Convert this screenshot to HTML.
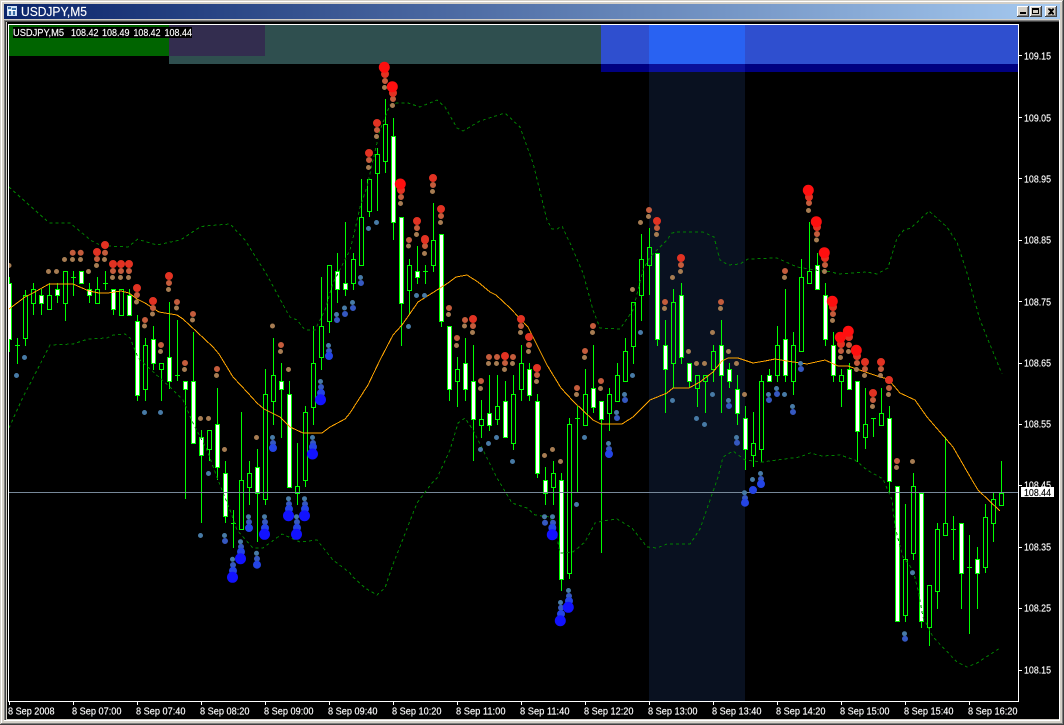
<!DOCTYPE html>
<html><head><meta charset="utf-8"><title>USDJPY,M5</title>
<style>
html,body{margin:0;padding:0;background:#d4d0c8;width:1064px;height:725px;overflow:hidden}
svg{display:block}
text{font-family:"Liberation Sans",sans-serif;fill:#fff;stroke:#fff;stroke-width:.15}
.c{shape-rendering:crispEdges}
</style></head><body>
<svg width="1064" height="725" viewBox="0 0 1064 725" xmlns="http://www.w3.org/2000/svg">
<defs>
<linearGradient id="tb" x1="0" x2="1" y1="0" y2="0"><stop offset="0" stop-color="#0a246a"/><stop offset="1" stop-color="#a6caf0"/></linearGradient>
<clipPath id="cl"><rect x="9" y="25" width="1009" height="676"/></clipPath>
</defs>
<g class="c">
<rect width="1064" height="725" fill="#d4d0c8"/>
<rect x="1" y="1" width="1062" height="1" fill="#fff"/>
<rect x="1" y="1" width="1" height="723" fill="#fff"/>
<rect x="0" y="724" width="1064" height="1" fill="#404040"/>
<rect x="1063" y="0" width="1" height="725" fill="#404040"/>
<rect x="1" y="723" width="1062" height="1" fill="#808080"/>
<rect x="1062" y="1" width="1" height="723" fill="#808080"/>
<rect x="4" y="4" width="1056" height="15" fill="url(#tb)"/>
<rect x="4" y="20" width="1056" height="1" fill="#808080"/>
<rect x="4" y="21" width="1056" height="1" fill="#404040"/>
<rect x="4" y="20" width="1" height="701" fill="#808080"/>
<rect x="5" y="21" width="1" height="699" fill="#404040"/>
<rect x="4" y="720" width="1056" height="1" fill="#fff"/>
<rect x="1059" y="20" width="1" height="701" fill="#fff"/>
<rect x="7" y="22" width="1052" height="697" fill="#000"/>
<!-- icon -->
<rect x="7" y="6" width="10" height="10" fill="#cfe0f5"/>
<rect x="8" y="7" width="3" height="2" fill="#3a6ea5"/><rect x="12" y="8" width="4" height="2" fill="#3a6ea5"/>
<rect x="8" y="10" width="8" height="1" fill="#fff"/><rect x="9" y="11" width="2" height="4" fill="#3a6ea5"/><rect x="13" y="11" width="2" height="4" fill="#3a6ea5"/>
<!-- buttons -->
<g>
<rect x="1017" y="6" width="12" height="11" fill="#404040"/><rect x="1017" y="6" width="11" height="10" fill="#fff"/><rect x="1018" y="7" width="10" height="9" fill="#808080"/><rect x="1018" y="7" width="9" height="8" fill="#d4d0c8"/>
<rect x="1020" y="12" width="6" height="2" fill="#000"/>
<rect x="1030" y="6" width="12" height="11" fill="#404040"/><rect x="1030" y="6" width="11" height="10" fill="#fff"/><rect x="1031" y="7" width="10" height="9" fill="#808080"/><rect x="1031" y="7" width="9" height="8" fill="#d4d0c8"/>
<path d="M1032.5 8.5h6v5h-6z" fill="none" stroke="#000"/><rect x="1032" y="8" width="7" height="2" fill="#000"/>
<rect x="1045" y="6" width="12" height="11" fill="#404040"/><rect x="1045" y="6" width="11" height="10" fill="#fff"/><rect x="1046" y="7" width="10" height="9" fill="#808080"/><rect x="1046" y="7" width="9" height="8" fill="#d4d0c8"/>
<path d="M1048 8.5h2l1 1 1-1h2v1l-2 2 2 2v1h-2l-1-1-1 1h-2v-1l2-2-2-2z" fill="#000"/>
</g>
<!-- chart backgrounds -->
<rect x="649" y="25" width="96" height="676" fill="#091120"/>
<rect x="9" y="25" width="160" height="31" fill="#006400"/>
<rect x="169" y="25" width="432" height="39" fill="#2f4f4f"/>
<rect x="169" y="25" width="96" height="31" fill="#332d4f"/>
<rect x="601" y="25" width="417" height="39" fill="#2f4fcf"/>
<rect x="649" y="25" width="96" height="39" fill="#2962f2"/>
<rect x="601" y="64" width="417" height="8" fill="#000080"/>
<rect x="649" y="64" width="96" height="8" fill="#0a109a"/>
</g>
<g clip-path="url(#cl)">
<!-- wicks -->
<path class="c" fill="none" stroke="#0f0" d="M9.5 277V352M17.5 338V364M25.5 290V346M33.5 283V315M41.5 289V315M49.5 283V309M57.5 283V303M65.5 271V321M73.5 271V296M81.5 271V283M89.5 283V303M97.5 277V303M105.5 271V290M113.5 289V315M121.5 289V315M129.5 289V315M137.5 315V401M145.5 338V401M153.5 326V370M161.5 363V401M169.5 302V389M177.5 320V381M185.5 381V499M193.5 332V443M201.5 430V523M209.5 430V461M217.5 388V480M225.5 461V523M233.5 510V548M241.5 412V529M249.5 461V505M257.5 449V542M265.5 369V505M273.5 338V425M281.5 363V438M289.5 381V487M297.5 443V505M305.5 406V487M313.5 326V425M321.5 277V370M329.5 265V333M337.5 253V303M345.5 222V296M353.5 253V290M361.5 179V265M369.5 179V217M377.5 148V211M385.5 99V173M393.5 118V240M401.5 217V346M409.5 259V315M417.5 246V284M425.5 265V284M433.5 203V272M441.5 234V327M449.5 326V401M457.5 357V407M465.5 338V401M473.5 345V461M481.5 400V438M489.5 375V431M497.5 375V425M505.5 381V437M513.5 375V450M521.5 345V401M529.5 363V401M537.5 394V478M545.5 467V505M553.5 461V505M561.5 473V591M569.5 418V579M577.5 406V493M585.5 369V425M593.5 345V413M601.5 401V553M609.5 388V431M617.5 363V401M625.5 338V381M633.5 302V364M641.5 234V321M649.5 228V295M657.5 253V346M665.5 320V413M673.5 289V388M681.5 283V364M689.5 363V388M697.5 375V407M705.5 375V413M713.5 345V382M721.5 320V413M729.5 363V388M737.5 375V425M745.5 406V470M753.5 412V467M761.5 375V462M769.5 369V381M777.5 326V382M785.5 289V382M793.5 332V395M801.5 259V351M809.5 222V283M817.5 253V289M825.5 283V346M833.5 332V382M841.5 369V407M849.5 363V389M857.5 381V462M865.5 388V449M873.5 418V437M881.5 388V425M889.5 406V492M897.5 486V621M905.5 504V622M913.5 473V560M921.5 493V628M929.5 585V646M937.5 523V609M945.5 437V535M953.5 516V560M961.5 523V609M969.5 535V634M977.5 547V609M985.5 504V573M993.5 493V542M1001.5 461V505
M15 345.5h5M71 277.5h5M103 283.5h5M175 375.5h5M231 523.5h5M423 271.5h5M575 418.5h5M871 418.5h5M951 529.5h5M967 567.5h5"/>
<!-- hollow bodies, black background -->
<path class="c" fill="#000" stroke="#0f0" d="M23.5 295.5h4v43h-4zM31.5 289.5h4v14h-4zM47.5 295.5h4v14h-4zM63.5 271.5h4v32h-4zM95.5 289.5h4v14h-4zM119.5 289.5h4v26h-4zM143.5 345.5h4v44h-4zM159.5 363.5h4v6h-4zM207.5 430.5h4v19h-4zM239.5 480.5h4v49h-4zM247.5 473.5h4v14h-4zM263.5 394.5h4v105h-4zM271.5 375.5h4v26h-4zM295.5 486.5h4v7h-4zM303.5 412.5h4v68h-4zM311.5 363.5h4v44h-4zM319.5 326.5h4v31h-4zM327.5 265.5h4v56h-4zM351.5 259.5h4v24h-4zM359.5 217.5h4v48h-4zM367.5 179.5h4v32h-4zM375.5 154.5h4v19h-4zM383.5 124.5h4v37h-4zM407.5 265.5h4v25h-4zM431.5 240.5h4v25h-4zM455.5 369.5h4v12h-4zM479.5 419.5h4v6h-4zM495.5 406.5h4v13h-4zM511.5 394.5h4v49h-4zM519.5 363.5h4v26h-4zM551.5 473.5h4v14h-4zM567.5 424.5h4v149h-4zM583.5 394.5h4v31h-4zM607.5 394.5h4v19h-4zM615.5 375.5h4v26h-4zM623.5 351.5h4v30h-4zM631.5 302.5h4v44h-4zM639.5 259.5h4v36h-4zM751.5 443.5h4v12h-4zM759.5 381.5h4v68h-4zM775.5 345.5h4v30h-4zM791.5 345.5h4v36h-4zM799.5 277.5h4v74h-4zM807.5 271.5h4v12h-4zM839.5 375.5h4v6h-4zM863.5 424.5h4v13h-4zM879.5 413.5h4v12h-4zM903.5 559.5h4v56h-4zM911.5 486.5h4v67h-4zM927.5 585.5h4v42h-4zM935.5 529.5h4v62h-4zM943.5 523.5h4v12h-4zM983.5 517.5h4v50h-4zM991.5 499.5h4v24h-4zM999.5 493.5h4v12h-4z"/>
<!-- hollow bodies inside shaded column -->
<path class="c" fill="#091120" stroke="#0f0" d="M647.5 247.5h4v18h-4zM671.5 302.5h4v61h-4zM695.5 375.5h4v13h-4zM703.5 375.5h4v6h-4zM711.5 351.5h4v18h-4z"/>
<!-- white bodies -->
<path class="c" fill="#fff" stroke="#0f0" d="M7.5 283.5h4v56h-4zM39.5 295.5h4v8h-4zM55.5 289.5h4v6h-4zM79.5 271.5h4v12h-4zM87.5 289.5h4v6h-4zM111.5 289.5h4v20h-4zM127.5 295.5h4v20h-4zM135.5 321.5h4v74h-4zM151.5 339.5h4v24h-4zM167.5 357.5h4v24h-4zM183.5 381.5h4v8h-4zM191.5 381.5h4v62h-4zM199.5 437.5h4v18h-4zM215.5 424.5h4v43h-4zM223.5 473.5h4v43h-4zM255.5 467.5h4v26h-4zM279.5 381.5h4v8h-4zM287.5 394.5h4v93h-4zM335.5 271.5h4v18h-4zM343.5 283.5h4v6h-4zM391.5 136.5h4v86h-4zM399.5 217.5h4v86h-4zM415.5 271.5h4v6h-4zM439.5 234.5h4v87h-4zM447.5 326.5h4v63h-4zM463.5 363.5h4v26h-4zM471.5 381.5h4v38h-4zM487.5 413.5h4v12h-4zM503.5 401.5h4v36h-4zM527.5 369.5h4v26h-4zM535.5 401.5h4v72h-4zM543.5 480.5h4v13h-4zM559.5 480.5h4v99h-4zM591.5 388.5h4v19h-4zM599.5 401.5h4v18h-4zM655.5 253.5h4v86h-4zM663.5 345.5h4v24h-4zM679.5 295.5h4v62h-4zM687.5 363.5h4v18h-4zM719.5 345.5h4v30h-4zM727.5 369.5h4v12h-4zM735.5 389.5h4v24h-4zM743.5 418.5h4v31h-4zM767.5 375.5h4v6h-4zM783.5 339.5h4v36h-4zM815.5 265.5h4v24h-4zM823.5 295.5h4v44h-4zM831.5 345.5h4v30h-4zM847.5 369.5h4v20h-4zM855.5 381.5h4v50h-4zM887.5 418.5h4v63h-4zM895.5 486.5h4v135h-4zM919.5 493.5h4v128h-4zM959.5 523.5h4v50h-4zM975.5 559.5h4v14h-4z"/>
<!-- horizontal price line -->
<rect class="c" x="9" y="492" width="1009" height="1" fill="#778899"/>
<!-- Bollinger dashed -->
<g class="c" fill="none" stroke="#008000" stroke-dasharray="3 3">
<polyline points="9,187 46,220 50,223 70,223 87,237 90,240 100,245 107,246 128,247 138,239 140,240 157,245 180,240 182,239 200,227 205,226 230,224 245,240 267,275 287,312 290,317 297,320 305,330 315,330 325,310 333,283 350,250 355,230 360,207 367,187 373,160 380,130 390,105 397,103 408,103 420,107 437,100 445,107 457,128 463,131 480,121 505,113 520,127 533,163 547,220 552,229 557,229 562,226 568,239 570,243 583,273 593,310 600,328 620,329 633,310 643,270 650,257 667,240 672,233 677,232 703,232 714,237 720,260 728,265 740,264 748,259 777,258 797,267 815,270 832,272 838,274 867,272 877,274 888,268 897,238 904,230 911,228 929,211 947,227 954,238 957,242 967,273 980,320 1002,374"/>
<polyline points="9,428 23,397 33,378 50,345 73,344 88,339 107,338 113,335 125,334 130,338 137,355 140,360 160,378 170,387 183,400 193,423 207,450 218,480 230,510 237,530 253,548 263,548 282,534 300,542 317,540 333,560 350,573 352,576 365,588 377,595 385,588 392,567 417,503 432,483 437,478 450,450 458,423 465,418 473,430 497,478 500,483 512,503 527,508 535,515 550,517 557,537 560,553 573,552 585,542 595,523 602,521 617,519 632,528 647,547 657,548 667,544 690,544 700,529 717,480 718,477 723,457 733,451 745,460 762,462 800,457 810,453 822,456 840,455 855,460 867,470 883,479 892,500 895,527 903,557 913,570 918,590 923,617 933,637 957,662 967,667 977,663 1000,648"/>
</g>
<!-- moving average -->
<polyline class="c" fill="none" stroke="#ffa500" points="9,309 25,297 33,293 49,284 73,284 89,291 99,293 108,293 121,291 129,293 137,299 145,303 159,312 177,315 183,319 197,332 213,347 219,354 233,377 248,393 257,403 264,409 280,417 290,427 303,433 322,433 330,427 345,419 350,413 368,385 380,360 393,335 402,325 418,302 437,290 448,283 456,277 467,275 478,282 490,292 496,295 510,308 528,327 547,365 561,388 573,401 593,420 601,424 622,424 633,417 650,400 667,393 673,388 689,388 700,382 713,372 722,361 728,358 738,358 753,363 765,361 775,359 787,361 807,364 825,360 838,366 848,366 880,377 888,379 900,393 915,400 927,417 940,432 953,447 972,480 978,490 1000,511"/>
<!-- dots: tan -->
<path fill="none" stroke="#a67c52" stroke-width="5" stroke-linecap="round" d="M64.5 259.5h0M72.5 259.5h0M80.5 259.5h0M104.5 259.5h0M96.5 265.5h0M9 265.5h0M48.5 271.5h0M56.5 271.5h0M88.5 271.5h0M112.5 277.5h0M120.5 277.5h0M128.5 277.5h0M168.5 289.5h0M136.5 302h0M176.5 308h0M152.5 314h0M192.5 320h0M144.5 326h0M272.5 326h0M280.5 351.5h0M160.5 351.5h0M184.5 369.5h0M288.5 369.5h0M216.5 375.5h0M256.5 437.5h0M200.5 418.5h0M208.5 418.5h0M224.5 449.5h0M408.5 246h0M424.5 253.5h0M448.5 314.5h0M464.5 326h0M472.5 332.5h0M520.5 332.5h0M456.5 345.5h0M528.5 351.5h0M488.5 363.5h0M496.5 363.5h0M512.5 363.5h0M504.5 369.5h0M536.5 381.5h0M480.5 388.5h0M600.5 388.5h0M576.5 394.5h0M552.5 449.5h0M544.5 455.5h0M560.5 461.5h0M592.5 332.5h0M584.5 357.5h0M632.5 289.5h0M664.5 308.5h0M672.5 277.5h0M680.5 271.5h0M688.5 351.5h0M696.5 363.5h0M384.5 87.5h0M392.5 105.5h0M400.5 203.5h0M376.5 136.5h0M368.5 167.5h0M432.5 191.5h0M440.5 222.5h0M416.5 234.5h0M656.5 234.5h0M648.5 216.5h0M640.5 222.5h0M808.5 210.5h0M816.5 240h0M824.5 271.5h0M832.5 320.5h0M840.5 357.5h0M848.5 351.5h0M856.5 369.5h0M864.5 375.5h0M880.5 375.5h0M888.5 394.5h0M872.5 406.5h0M784.5 277.5h0M720.5 308.5h0M712.5 332.5h0M728.5 351.5h0M704.5 363.5h0M736.5 363.5h0M744.5 394.5h0M896.5 467.5h0M912.5 461.5h0"/>
<!-- brown -->
<path fill="none" stroke="#c45c3c" stroke-width="6" stroke-linecap="round" d="M72.7 252.7h0M80.7 252.7h0M105 252.7h0M97 259h0M113 271h0M121 271h0M129 271h0M169 283h0M137 295h0M153 308h0M177 302h0M193 314h0M145 320h0M161 345h0M281 345h0M185 363h0M217 369h0M409 240h0M425 246h0M449 308h0M465 320h0M473 326h0M521 326h0M457 338h0M529 345h0M489 357h0M497 357h0M513 357h0M505 363h0M537 375h0M481 381h0M601 381h0M577 388h0M593 326h0M585 351h0M665 302h0M681 265h0M385 81h0M393 99h0M401 197h0M377 130h0M369 160h0M433 185h0M441 216h0M417 228h0M657 228h0M649 210h0M809 203h0M817 234h0M825 265h0M833 314h0M841 351h0M849 345h0M857 363h0M865 369h0M881 369h0M889 388h0M873 400h0M785 271h0M897 461h0M721 302h0"/>
<!-- red -->
<path fill="none" stroke="#e23222" stroke-width="8" stroke-linecap="round" d="M97 252h0M105 245h0M113 264h0M121 264h0M129 264h0M169 276h0M137 288h0M153 301h0M473 319h0M521 319h0M529 337h0M505 356h0M537 368h0M681 258h0M425 240h0M385 74h0M393 93h0M401 190h0M377 123h0M369 153h0M433 178h0M441 209h0M417 221h0M425 239h0M657 221h0M809 197h0M817 227h0M825 258h0M833 307h0M841 344h0M849 337h0M857 356h0M865 362h0M881 362h0M889 380h0M873 393h0"/>
<!-- big red -->
<path fill="none" stroke="#ff0f0f" stroke-width="11" stroke-linecap="round" d="M384.3 67.3h0M392.3 86.7h0M400.3 184h0M824.3 252.7h0M832.3 301.3h0M840.3 337.3h0M848.3 331.3h0M856.3 350.3h0M808.3 190.3h0M816.3 221.7h0"/>
<!-- steel blue -->
<path fill="none" stroke="#477aa5" stroke-width="5" stroke-linecap="round" d="M24.5 357.5h0M16.5 375.5h0M144.5 412.5h0M160.5 412.5h0M208.5 473.5h0M344.5 308h0M336.5 314.5h0M328.5 345.5h0M320.5 381.5h0M272.5 437.5h0M312.5 437.5h0M200.5 535.5h0M224.5 535.5h0M248.5 516.7h0M264.5 516.7h0M288.5 498.7h0M304.5 498.7h0M296.5 516.7h0M240.5 541.7h0M256.5 553.3h0M232.5 559.3h0M360.5 277.5h0M352.5 302.5h0M416.5 295.5h0M424.5 295.5h0M408.5 326.5h0M624.5 394.5h0M616.5 412.5h0M608.5 443.5h0M488.5 443.5h0M496.5 437.5h0M480.5 449.5h0M512.5 461.5h0M584.5 437.5h0M632.5 375.5h0M640.5 332.5h0M672.5 400.5h0M696.5 418.5h0M368.5 228.5h0M376.5 222.5h0M544.5 516.7h0M552.5 516.7h0M576.5 504.5h0M568.5 590.5h0M560.5 602.5h0M712.5 394.5h0M704.5 424.5h0M728.5 400.5h0M736.5 437.5h0M776.5 388.5h0M768.5 394.5h0M784.5 394.5h0M792.5 406.5h0M800.5 363.5h0M760.5 473.5h0M752.5 479.5h0M744.5 492.7h0M904.5 633.7h0M912.5 572.7h0"/>
<!-- mid blue -->
<path fill="none" stroke="#3558c0" stroke-width="6" stroke-linecap="round" d="M345 314h0M337 320h0M329 351h0M321 387h0M273 443h0M313 443h0M225 541h0M249 522h0M265 522h0M289 504h0M305 504h0M297 522h0M241 546.7h0M257 558.7h0M233 565h0M361 283h0M353 308h0M625 400h0M617 418h0M609 449h0M545 522.7h0M553 522.7h0M569 596h0M561 607.7h0M729 406h0M737 442.7h0M777 394h0M769 400h0M793 412h0M801 369h0M761 479h0M745 498h0M905 638.7h0"/>
<!-- bright blue -->
<path fill="none" stroke="#2444e4" stroke-width="8" stroke-linecap="round" d="M329 356h0M321 393h0M273 448h0M313 447h0M249 528h0M265 528h0M289 509h0M305 509h0M297 527.7h0M241 551.7h0M257 564.7h0M233 570.7h0M552.3 527.7h0M569 601h0M561 614h0M609 454h0M761 484h0M753 490h0M745 502.7h0"/>
<!-- big blue -->
<path fill="none" stroke="#1212ff" stroke-width="11" stroke-linecap="round" d="M320.5 399.7h0M312.5 454h0M264.5 534.3h0M288.5 515.7h0M304.5 515.7h0M296.5 534.3h0M240.5 558.7h0M232.5 577.3h0M552.3 534.7h0M568.3 607.3h0M560.3 620.7h0"/>
</g>
<!-- axes -->
<g class="c" fill="#fff">
<rect x="8" y="24" width="1011" height="1"/><rect x="8" y="24" width="1" height="678"/><rect x="1018" y="24" width="1" height="678"/><rect x="8" y="701" width="1011" height="1"/>
<path d="M1019 55h3v1h-3zM1019 117h3v1h-3zM1019 178h3v1h-3zM1019 240h3v1h-3zM1019 301h3v1h-3zM1019 363h3v1h-3zM1019 424h3v1h-3zM1019 485h3v1h-3zM1019 547h3v1h-3zM1019 608h3v1h-3zM1019 670h3v1h-3z"/>
<path d="M9 702h1v3h-1zM73 702h1v3h-1zM137 702h1v3h-1zM201 702h1v3h-1zM265 702h1v3h-1zM329 702h1v3h-1zM393 702h1v3h-1zM457 702h1v3h-1zM521 702h1v3h-1zM585 702h1v3h-1zM649 702h1v3h-1zM713 702h1v3h-1zM777 702h1v3h-1zM841 702h1v3h-1zM905 702h1v3h-1zM969 702h1v3h-1z"/>
</g>
<!-- title -->
<text x="21" y="16" font-size="12.5" textLength="66" lengthAdjust="spacingAndGlyphs">USDJPY,M5</text>
<!-- info label -->
<rect class="c" x="13" y="27" width="179" height="11" fill="#000"/>
<g font-size="10.5">
<text x="13" y="36" textLength="51" lengthAdjust="spacingAndGlyphs">USDJPY,M5</text>
<text x="71" y="36" textLength="27.5" lengthAdjust="spacingAndGlyphs">108.42</text>
<text x="102" y="36" textLength="27.5" lengthAdjust="spacingAndGlyphs">108.49</text>
<text x="133.5" y="36" textLength="27" lengthAdjust="spacingAndGlyphs">108.42</text>
<text x="164.5" y="36" textLength="27.5" lengthAdjust="spacingAndGlyphs">108.44</text>
</g>
<!-- price axis -->
<g font-size="10.5">
<text x="1024" y="59.5" textLength="27" lengthAdjust="spacingAndGlyphs">109.15</text>
<text x="1024" y="121.5" textLength="27" lengthAdjust="spacingAndGlyphs">109.05</text>
<text x="1024" y="182.5" textLength="27" lengthAdjust="spacingAndGlyphs">108.95</text>
<text x="1024" y="243.5" textLength="27" lengthAdjust="spacingAndGlyphs">108.85</text>
<text x="1024" y="305.5" textLength="27" lengthAdjust="spacingAndGlyphs">108.75</text>
<text x="1024" y="366.5" textLength="27" lengthAdjust="spacingAndGlyphs">108.65</text>
<text x="1024" y="427.5" textLength="27" lengthAdjust="spacingAndGlyphs">108.55</text>
<text x="1024" y="488.5" textLength="27" lengthAdjust="spacingAndGlyphs">108.45</text>
<text x="1024" y="550.5" textLength="27" lengthAdjust="spacingAndGlyphs">108.35</text>
<text x="1024" y="611.5" textLength="27" lengthAdjust="spacingAndGlyphs">108.25</text>
<text x="1024" y="673.5" textLength="27" lengthAdjust="spacingAndGlyphs">108.15</text>
</g>
<rect class="c" x="1021" y="487" width="33" height="10" fill="#fff"/>
<text x="1024" y="496" font-size="10.5" textLength="27" lengthAdjust="spacingAndGlyphs" style="fill:#000;stroke:#000">108.44</text>
<!-- time axis -->
<g font-size="10.5">
<text x="8" y="714.5" textLength="46.5" lengthAdjust="spacingAndGlyphs">8 Sep 2008</text>
<text x="72" y="714.5" textLength="49.5" lengthAdjust="spacingAndGlyphs">8 Sep 07:00</text>
<text x="136" y="714.5" textLength="49.5" lengthAdjust="spacingAndGlyphs">8 Sep 07:40</text>
<text x="200" y="714.5" textLength="49.5" lengthAdjust="spacingAndGlyphs">8 Sep 08:20</text>
<text x="264" y="714.5" textLength="49.5" lengthAdjust="spacingAndGlyphs">8 Sep 09:00</text>
<text x="328" y="714.5" textLength="49.5" lengthAdjust="spacingAndGlyphs">8 Sep 09:40</text>
<text x="392" y="714.5" textLength="49.5" lengthAdjust="spacingAndGlyphs">8 Sep 10:20</text>
<text x="456" y="714.5" textLength="49.5" lengthAdjust="spacingAndGlyphs">8 Sep 11:00</text>
<text x="520" y="714.5" textLength="49.5" lengthAdjust="spacingAndGlyphs">8 Sep 11:40</text>
<text x="584" y="714.5" textLength="49.5" lengthAdjust="spacingAndGlyphs">8 Sep 12:20</text>
<text x="648" y="714.5" textLength="49.5" lengthAdjust="spacingAndGlyphs">8 Sep 13:00</text>
<text x="712" y="714.5" textLength="49.5" lengthAdjust="spacingAndGlyphs">8 Sep 13:40</text>
<text x="776" y="714.5" textLength="49.5" lengthAdjust="spacingAndGlyphs">8 Sep 14:20</text>
<text x="840" y="714.5" textLength="49.5" lengthAdjust="spacingAndGlyphs">8 Sep 15:00</text>
<text x="904" y="714.5" textLength="49.5" lengthAdjust="spacingAndGlyphs">8 Sep 15:40</text>
<text x="968" y="714.5" textLength="49.5" lengthAdjust="spacingAndGlyphs">8 Sep 16:20</text>
</g>
</svg>
</body></html>
